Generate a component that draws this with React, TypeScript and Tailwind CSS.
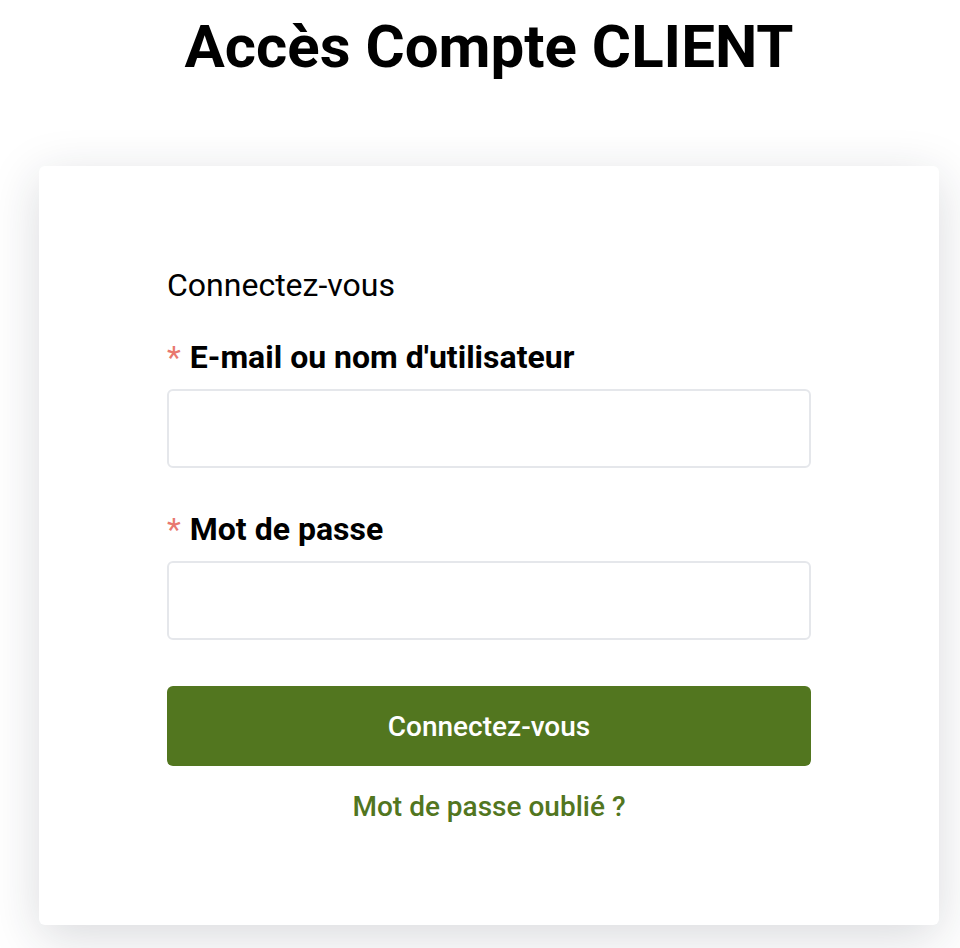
export default function App() {
  return (
    <div className="min-h-screen bg-white font-['Roboto',sans-serif] text-black">
      <div className="ml-[39px] mr-[21px]">
        <h1 className="pt-[13px] text-center text-[60px] font-bold leading-[68px]">
          Accès Compte CLIENT
        </h1>

        <div className="mt-[85px] rounded-md bg-white px-[128px] pt-[101px] pb-[102px] shadow-[0_12px_50px_rgba(30,35,55,0.17)]">
          <p className="text-[32px] leading-[36px]">Connectez-vous</p>

          <form className="mt-[36px]" onSubmit={(event) => event.preventDefault()}>
            <label htmlFor="login" className="flex items-start text-[32px] font-bold leading-[36px]">
              <span className="mr-[9px] font-normal text-[#e8786f]">*</span>
              E-mail ou nom d'utilisateur
            </label>
            <input
              id="login"
              type="text"
              className="mt-[14px] block h-[79px] w-full rounded-md border-2 border-[#e5e7eb] bg-white px-4 text-[24px] outline-none"
            />

            <label htmlFor="password" className="mt-[43px] flex items-start text-[32px] font-bold leading-[36px]">
              <span className="mr-[9px] font-normal text-[#e8786f]">*</span>
              Mot de passe
            </label>
            <input
              id="password"
              type="password"
              className="mt-[14px] block h-[79px] w-full rounded-md border-2 border-[#e5e7eb] bg-white px-4 text-[24px] outline-none"
            />

            <button
              type="submit"
              className="mt-[46px] flex h-[80px] w-full items-center justify-center rounded-md bg-[#52761f] pt-[2px] text-[28px] font-medium text-white"
            >
              Connectez-vous
            </button>
          </form>

          <div className="mt-[25px] text-center text-[28px] font-medium leading-[32px]">
            <a href="#" className="text-[#52761f]">
              Mot de passe oublié ?
            </a>
          </div>
        </div>
      </div>
    </div>
  );
}
